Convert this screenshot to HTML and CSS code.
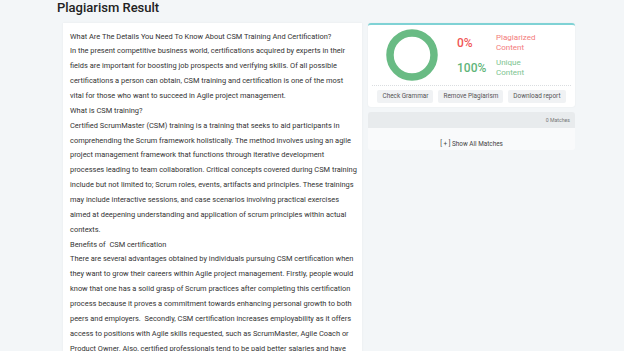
FILE: index.html
```
<!DOCTYPE html>
<html>
<head>
<meta charset="utf-8">
<link rel="stylesheet" href="styles.css">
</head>
<body>
<div class="page">
  <h1 class="title">Plagiarism Result</h1>
  <div class="layout">
    <div class="doc">
      <p>What Are The Details You Need To Know About CSM Training And Certification?</p>
      <p>In the present competitive business world, certifications acquired by experts in their fields are important for boosting job prospects and verifying skills. Of all possible certifications a person can obtain, CSM training and certification is one of the most vital for those who want to succeed in Agile project management.</p>
      <p>What is CSM training?</p>
      <p>Certified ScrumMaster (CSM) training is a training that seeks to aid participants in comprehending the Scrum framework holistically. The method involves using an agile project management framework that functions through iterative development processes leading to team collaboration. Critical concepts covered during CSM training include but not limited to; Scrum roles, events, artifacts and principles. These trainings may include interactive sessions, and case scenarios involving practical exercises aimed at deepening understanding and application of scrum principles within actual contexts.</p>
      <p>Benefits of &nbsp;CSM certification</p>
      <p>There are several advantages obtained by individuals pursuing CSM certification when they want to grow their careers within Agile project management. Firstly, people would know that one has a solid grasp of Scrum practices after completing this certification process because it proves a commitment towards enhancing personal growth to both peers and employers. &nbsp;Secondly, CSM certification increases employability as it offers access to positions with Agile skills requested, such as ScrumMaster, Agile Coach or Product Owner. Also, certified professionals tend to be paid better salaries and have more opportunities for career advancement.</p>
    </div>
    <div class="side">
      <div class="result">
        <div class="summary">
          <svg class="donut" width="52" height="52" viewBox="0 0 52 52">
            <circle cx="26" cy="26" r="22" fill="none" stroke="#69bb84" stroke-width="7.5"/>
          </svg>
          <div class="stats">
            <div class="pct red">0%</div>
            <div class="label red-l">Plagiarized<br>Content</div>
            <div class="pct green">100%</div>
            <div class="label green-l">Unique<br>Content</div>
          </div>
        </div>
        <div class="actions">
          <span class="btn">Check Grammar</span>
          <span class="btn">Remove Plagiarism</span>
          <span class="btn">Download report</span>
        </div>
      </div>
      <div class="matches">
        <div class="matches-head">0 Matches</div>
        <div class="matches-body">[ + ] Show All Matches</div>
      </div>
    </div>
  </div>
</div>
</body>
</html>
```
FILE: styles.css
```
* { box-sizing: border-box; }
html, body { margin: 0; padding: 0; }
body {
  background: #f3f6f8;
  font-family: Roboto, "Liberation Sans", sans-serif;
  color: #333;
  width: 624px;
  height: 351px;
  overflow: hidden;
}
.page { padding-left: 57px; }
.title {
  margin: 0;
  font-size: 13px;
  line-height: 16px;
  font-weight: 500;
  color: #222;
}
.layout {
  display: flex;
  gap: 6px;
  margin-top: 7px;
  padding-left: 6px;
  align-items: flex-start;
}
.doc {
  width: 299px;
  background: #fff;
  padding: 6.5px 5px 10px 7px;
  font-size: 7.45px;
  line-height: 14.86px;
  color: #333;
  box-shadow: 0 0 2px rgba(0,0,0,0.06);
}
.doc p { margin: 0; }
.side { width: 207px; }
.result {
  background: #fff;
  border-top: 2px solid #7fd2d5;
  border-radius: 3px;
  padding: 0 4px 4px;
  box-shadow: 0 0 2px rgba(0,0,0,0.06);
}
.summary {
  display: flex;
  align-items: center;
  height: 61px;
  border-bottom: 1px dotted #dadde0;
}
.donut { margin-left: 14px; display: block; }
.stats {
  margin-left: 19px;
  display: grid;
  grid-template-columns: 39px auto;
  grid-auto-rows: 20px;
  row-gap: 5px;
  align-items: center;
}
.pct { font-size: 12px; font-weight: 500; }
.label { font-size: 8px; line-height: 10px; }
.red { color: #f05656; }
.red-l { color: #f37b7b; }
.green { color: #5fb57a; }
.green-l { color: #7cc48f; }
.actions {
  display: flex;
  justify-content: center;
  gap: 5px;
  padding-top: 4px;
}
.btn {
  background: #f0f2f4;
  border-radius: 2px;
  font-size: 6.4px;
  line-height: 12.5px;
  padding: 0 5px;
  color: #555;
  white-space: nowrap;
}
.matches { margin-top: 5px; border-radius: 3px; overflow: hidden; }
.matches-head {
  background: #e8ebed;
  height: 16px;
  font-size: 5.2px;
  line-height: 16px;
  text-align: right;
  padding-right: 5px;
  color: #777;
}
.matches-body {
  background: #f9fafb;
  height: 22px;
  font-size: 6.4px;
  line-height: 8px;
  padding-top: 12px;
  text-align: center;
  color: #444;
}
```
